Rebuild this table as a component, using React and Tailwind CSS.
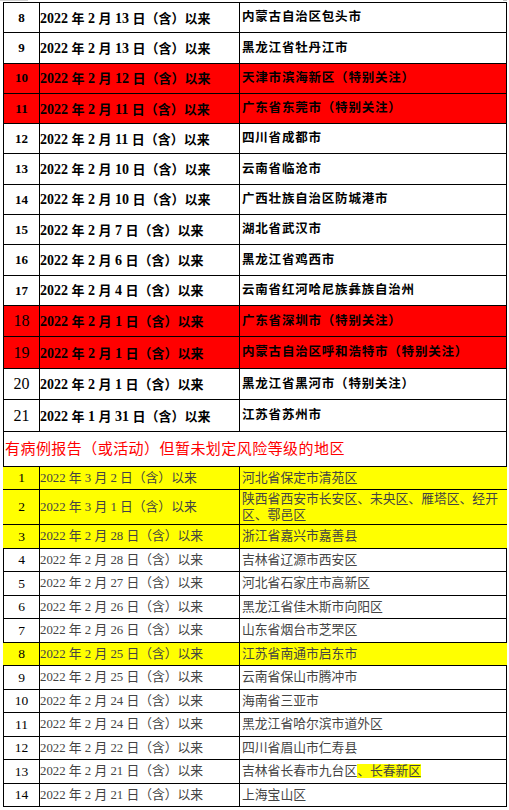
import React from "react";

const top = [
  ["8", "2022 年 2 月 13 日（含）以来", "内蒙古自治区包头市", ""],
  ["9", "2022 年 2 月 13 日（含）以来", "黑龙江省牡丹江市", ""],
  ["10", "2022 年 2 月 12 日（含）以来", "天津市滨海新区（特别关注）", "red"],
  ["11", "2022 年 2 月 11 日（含）以来", "广东省东莞市（特别关注）", "red"],
  ["12", "2022 年 2 月 11 日（含）以来", "四川省成都市", ""],
  ["13", "2022 年 2 月 10 日（含）以来", "云南省临沧市", ""],
  ["14", "2022 年 2 月 10 日（含）以来", "广西壮族自治区防城港市", ""],
  ["15", "2022 年 2 月 7 日（含）以来", "湖北省武汉市", ""],
  ["16", "2022 年 2 月 6 日（含）以来", "黑龙江省鸡西市", ""],
  ["17", "2022 年 2 月 4 日（含）以来", "云南省红河哈尼族彝族自治州", ""],
  ["18", "2022 年 2 月 1 日（含）以来", "广东省深圳市（特别关注）", "red"],
  ["19", "2022 年 2 月 1 日（含）以来", "内蒙古自治区呼和浩特市（特别关注）", "red"],
  ["20", "2022 年 2 月 1 日（含）以来", "黑龙江省黑河市（特别关注）", ""],
  ["21", "2022 年 1 月 31 日（含）以来", "江苏省苏州市", ""],
];

const bottom = [
  ["1", "2022 年 3 月 2 日（含）以来", "河北省保定市清苑区", true],
  ["2", "2022 年 3 月 1 日（含）以来", "two", true],
  ["3", "2022 年 2 月 28 日（含）以来", "浙江省嘉兴市嘉善县", true],
  ["4", "2022 年 2 月 28 日（含）以来", "吉林省辽源市西安区", false],
  ["5", "2022 年 2 月 27 日（含）以来", "河北省石家庄市高新区", false],
  ["6", "2022 年 2 月 26 日（含）以来", "黑龙江省佳木斯市向阳区", false],
  ["7", "2022 年 2 月 26 日（含）以来", "山东省烟台市芝罘区", false],
  ["8", "2022 年 2 月 25 日（含）以来", "江苏省南通市启东市", true],
  ["9", "2022 年 2 月 25 日（含）以来", "云南省保山市腾冲市", false],
  ["10", "2022 年 2 月 24 日（含）以来", "海南省三亚市", false],
  ["11", "2022 年 2 月 24 日（含）以来", "黑龙江省哈尔滨市道外区", false],
  ["12", "2022 年 2 月 22 日（含）以来", "四川省眉山市仁寿县", false],
  ["13", "2022 年 2 月 21 日（含）以来", "thirteen", false],
  ["14", "2022 年 2 月 21 日（含）以来", "上海宝山区", false],
];

const FONT = { fontFamily: '"Liberation Serif", "Noto Sans CJK SC", serif' };

function TopDate({ text }) {
  const parts = text.split(/([0-9 ]+)/).filter((p) => p.length);
  return (
    <span className="whitespace-pre">
      {parts.map((p, i) =>
        /^[0-9 ]+$/.test(p) ? (
          <span key={i} className="text-[14px]">
            {p}
          </span>
        ) : (
          <span key={i} className="text-[13px]">
            {p}
          </span>
        )
      )}
    </span>
  );
}

export default function App() {
  return (
    <div className="w-[509px] h-[810px] bg-white overflow-hidden" style={FONT}>
      <div className="h-[2px] flex justify-between">
        <div className="w-[28px] h-[1px] bg-[#d0d0d0]" />
        <div className="w-[4px] h-[1px] bg-[#c0c0c0] mr-[2px]" />
      </div>
      <table className="ml-[3px] w-[503px] table-fixed border-collapse">
        <colgroup>
          <col className="w-[36px]" />
          <col className="w-[200px]" />
          <col className="w-[267px]" />
        </colgroup>
        <tbody>
          {top.map(([n, d, loc, c], i) => {
            const big = i >= 10;
            const bg = c === "red" ? "bg-[#ff0000]" : "bg-white";
            return (
              <tr key={"t" + n} className={`${big ? "h-[31.5px]" : "h-[30.3px]"} ${bg}`}>
                <td
                  className={`border border-black text-center text-black p-0 ${
                    big ? "text-[16px] font-normal" : "text-[13px] font-bold"
                  }`}
                >
                  {n}
                </td>
                <td className="border border-black p-0 font-bold text-black whitespace-nowrap">
                  <TopDate text={d} />
                </td>
                <td className="border border-black p-0 pl-[2px] text-[12.5px] font-bold text-black tracking-[0.8px] whitespace-nowrap">
                  {loc}
                </td>
              </tr>
            );
          })}
          <tr className="h-[35px]">
            <td
              colSpan={3}
              className="border border-black p-0 pl-[1px] text-[15px] tracking-[0.45px] text-[#ff0000] whitespace-nowrap"
            >
              有病例报告（或活动）但暂未划定风险等级的地区
            </td>
          </tr>
          {bottom.map(([n, d, loc, y]) => {
            const bg = y ? "bg-[#ffff00]" : "bg-white";
            const tall = n === "2";
            let content = loc;
            if (loc === "two") {
              content = (
                <span className="leading-[16px] block">
                  陕西省西安市长安区、未央区、雁塔区、经开
                  <br />
                  区、鄠邑区
                </span>
              );
            } else if (loc === "thirteen") {
              content = (
                <span>
                  吉林省长春市九台区<span className="bg-[#ffff00]">、长春新区</span>
                </span>
              );
            }
            return (
              <tr key={"b" + n} className={`${tall ? "h-[35px]" : "h-[23.5px]"} ${bg}`}>
                <td
                  className={`border border-black ${
                    y ? "border-l-[#ffff00]" : ""
                  } text-center text-[13.5px] text-black p-0`}
                >
                  {n}
                </td>
                <td className="border border-black p-0 text-[12.8px] text-[#444] whitespace-nowrap">
                  {d}
                </td>
                <td
                  className={`border border-black ${
                    y ? "border-r-[#ffff00]" : ""
                  } p-0 pl-[2px] text-[12.8px] text-[#444] whitespace-nowrap`}
                >
                  {content}
                </td>
              </tr>
            );
          })}
        </tbody>
      </table>
    </div>
  );
}
